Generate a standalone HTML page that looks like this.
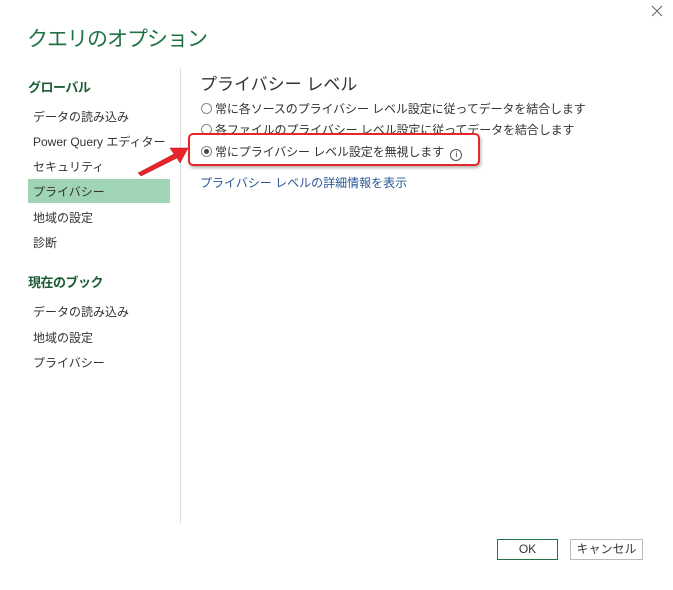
<!DOCTYPE html>
<html><head><meta charset="utf-8"><style>
body{margin:0;width:673px;height:590px;background:#fff;font-family:"Liberation Sans","Noto Sans CJK JP",sans-serif;position:relative;overflow:hidden;color:#333}
.a{position:absolute;white-space:nowrap}
.title{left:27px;top:23px;font-size:21px;color:#217346;letter-spacing:-1px}
.h{font-size:13px;font-weight:bold;color:#1e5e36;letter-spacing:-0.5px}
.it{font-size:12px;color:#333;left:33px}
.r{font-size:12px;color:#333;left:201px;letter-spacing:-0.1px}
.rad{display:inline-block;width:9px;height:9px;border:1px solid #888;border-radius:50%;vertical-align:-1px;margin-right:3px;position:relative}
.btn{position:absolute;height:19px;font-size:12px;text-align:center;line-height:19px;background:#fff}
</style></head><body>
<svg class="a" style="left:651px;top:5px" width="12" height="12"><path d="M1 1L11 11M11 1L1 11" stroke="#666" stroke-width="1"/></svg>
<div class="a title">クエリのオプション</div>
<div class="a" style="left:180px;top:68px;width:1px;height:455px;background:#ddd"></div>
<div class="a h" style="left:28px;top:77px">グローバル</div>
<div class="a it" style="top:108px">データの読み込み</div>
<div class="a it" style="top:133px">Power Query エディター</div>
<div class="a it" style="top:158px">セキュリティ</div>
<div class="a" style="left:28px;top:179px;width:142px;height:24px;background:#9fd5b5"></div>
<div class="a it" style="top:183px">プライバシー</div>
<div class="a it" style="top:209px">地域の設定</div>
<div class="a it" style="top:234px">診断</div>
<div class="a h" style="left:28px;top:272px">現在のブック</div>
<div class="a it" style="top:303px">データの読み込み</div>
<div class="a it" style="top:329px">地域の設定</div>
<div class="a it" style="top:354px">プライバシー</div>
<div class="a" style="left:200px;top:70px;font-size:17px;color:#333">プライバシー レベル</div>
<div class="a r" style="top:100px"><span class="rad"></span>常に各ソースのプライバシー レベル設定に従ってデータを結合します</div>
<div class="a r" style="top:121px"><span class="rad"></span>各ファイルのプライバシー レベル設定に従ってデータを結合します</div>
<div class="a r" style="top:143px"><span class="rad"><span style="position:absolute;left:2px;top:2px;width:5px;height:5px;border-radius:50%;background:#444"></span></span>常にプライバシー レベル設定を無視します <span style="display:inline-block;width:10px;height:10px;border:1px solid #555;border-radius:50%;font-size:8px;line-height:10px;text-align:center;vertical-align:-1px;margin-left:3px">i</span></div>
<div class="a" style="left:188px;top:133px;width:292px;height:33px;border:2px solid #e8262a;border-radius:5px;box-sizing:border-box;box-shadow:1px 2px 3px rgba(0,0,0,.3)"></div>
<svg class="a" style="left:130px;top:140px" width="62" height="40"><path d="M8 33 L44 14 L40 8 L58 8 L50 23 L47 18 L11 36 Z" fill="#e8262a" stroke="#b01010" stroke-width=".5"/></svg>
<div class="a" style="left:200px;top:174px;font-size:12px;color:#2b579a">プライバシー レベルの詳細情報を表示</div>
<div class="btn" style="left:497px;top:539px;width:59px;border:1px solid #217346;color:#333">OK</div>
<div class="btn" style="left:570px;top:539px;width:71px;border:1px solid #bbb;color:#333">キャンセル</div>
</body></html>
